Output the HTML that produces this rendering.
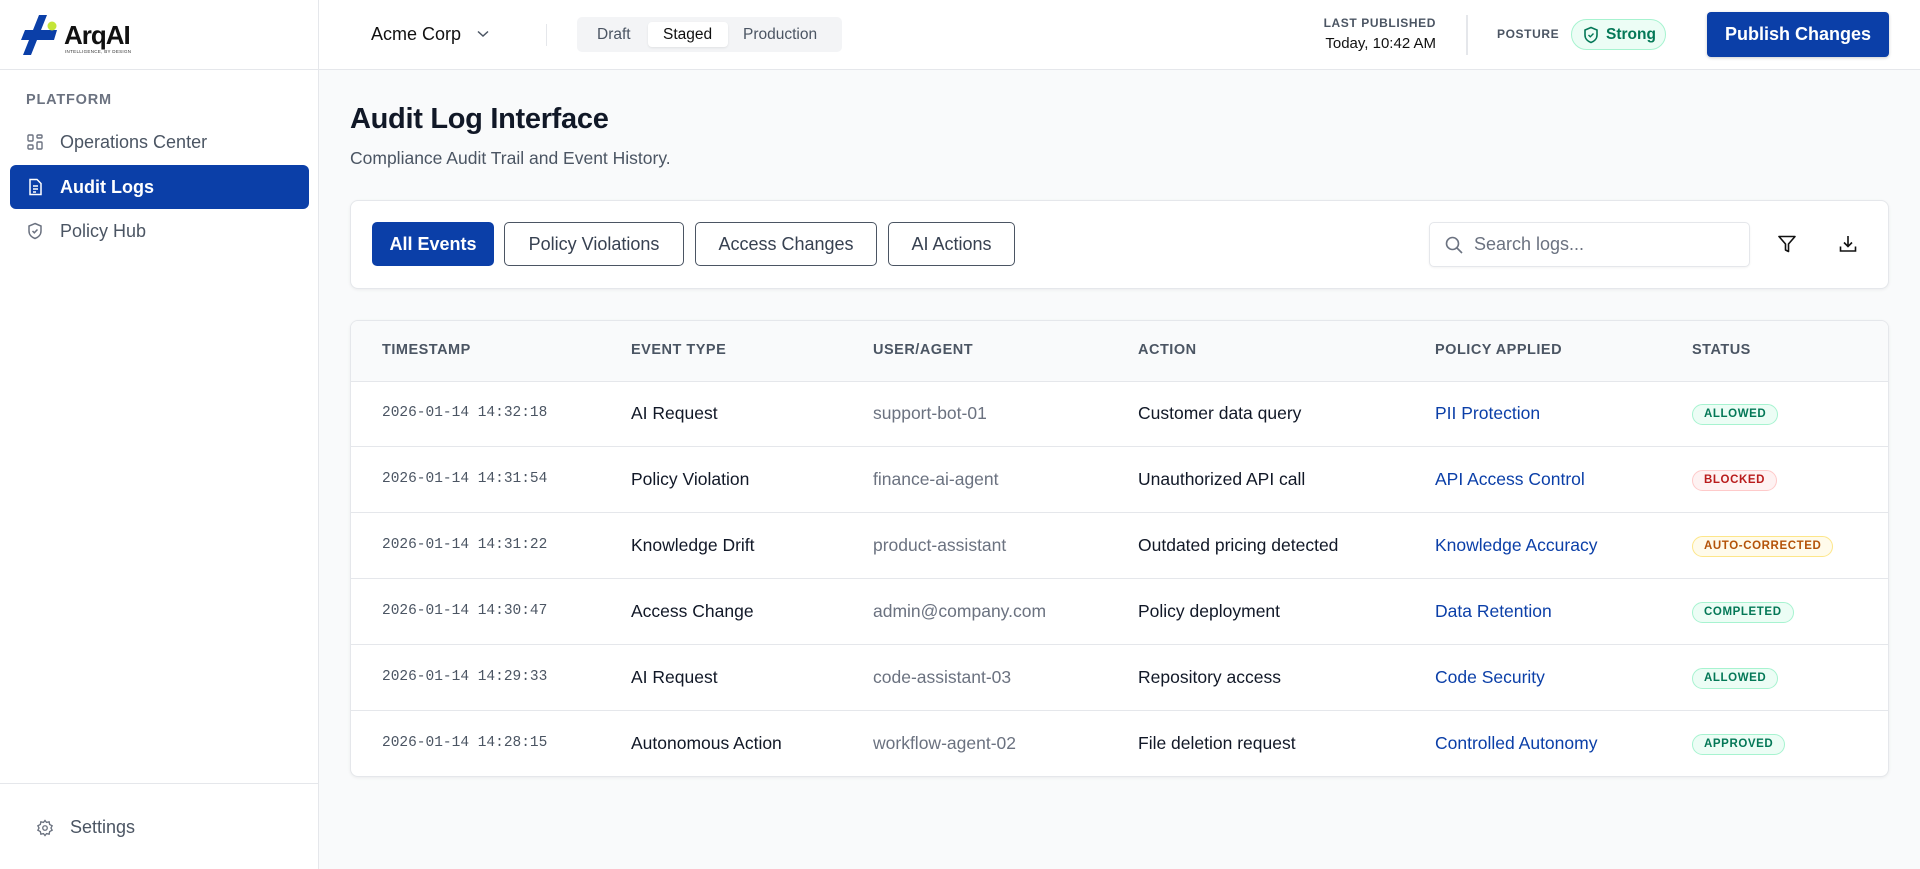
<!DOCTYPE html>
<html><head><meta charset="utf-8"><style>
*{box-sizing:border-box;margin:0;padding:0}
body{width:1920px;height:869px;overflow:hidden;font-family:"Liberation Sans",sans-serif;background:#f9fafb;color:#111827;position:relative}
.abs{position:absolute}
.side{left:0;top:0;width:319px;height:869px;background:#fff;border-right:1px solid #e5e7eb}
.head{left:319px;top:0;width:1601px;height:70px;background:#fff;border-bottom:1px solid #e5e7eb}
.logoline{left:0;top:69px;width:319px;height:1px;background:#e5e7eb}
.nav{left:10px;width:299px;height:44px;border-radius:6px;display:flex;align-items:center;padding-left:16px;font-size:18px;color:#4b5563}
.nav svg{margin-right:16px}
.btn{top:222px;height:44px;border:1px solid #4b5563;border-radius:5px;display:flex;align-items:center;justify-content:center;font-size:18px;color:#374151;background:#fff}
.th{top:320px;height:61px;line-height:61px;font-size:14.5px;font-weight:bold;color:#4b5563;letter-spacing:.5px}
.cell{font-size:17.5px}
.ts{font-family:"Liberation Mono",monospace;font-size:14.5px;color:#4b5563}
.badge{height:21px;line-height:19px;border-radius:11px;font-size:11.5px;font-weight:bold;letter-spacing:.6px;padding:0 11px;border:1px solid}
.g{background:#ecfdf5;border-color:#a7f3d0;color:#047857}
.r{background:#fef2f2;border-color:#fecaca;color:#b91c1c}
.y{background:#fffbeb;border-color:#fde68a;color:#b45309}
.rowline{left:351px;width:1537px;height:1px;background:#e5e7eb}
</style></head><body>
<div class="abs side"></div>
<div class="abs head"></div>
<div class="abs logoline"></div>
<!-- logo -->
<svg class="abs" style="left:18px;top:14px" width="42" height="42" viewBox="0 0 40 42">
<path d="M20 1 L28 1 L22 16 L38 16 L35 26 L18 26 L12 41 L4 41 L10 26 L2 26 L6 16 L14 16 Z" fill="#0b3fa8"/>
<circle cx="33" cy="12" r="4.5" fill="#c4e538"/>
</svg>
<div class="abs" style="left:64px;top:20px;font-size:26px;font-weight:bold;letter-spacing:-1px;color:#111">ArqAI</div>
<div class="abs" style="left:65px;top:49px;font-size:4.5px;letter-spacing:.3px;color:#333">INTELLIGENCE, BY DESIGN</div>
<!-- header -->
<div class="abs" style="left:371px;top:24px;font-size:18px;color:#111">Acme Corp</div>
<svg class="abs" style="left:477px;top:30px" width="12" height="8" viewBox="0 0 12 8"><path d="M1 1.5 L6 6 L11 1.5" fill="none" stroke="#4b5563" stroke-width="1.5"/></svg>
<div class="abs" style="left:546px;top:24px;width:1px;height:22px;background:#e5e7eb"></div>
<div class="abs" style="left:577px;top:17px;width:265px;height:35px;background:#f3f4f6;border-radius:5px"></div>
<div class="abs" style="left:597px;top:26px;font-size:15.5px;color:#4b5563">Draft</div>
<div class="abs" style="left:648px;top:22px;width:80px;height:25px;background:#fff;border-radius:4px;box-shadow:0 1px 2px rgba(0,0,0,.08)"></div>
<div class="abs" style="left:663px;top:26px;font-size:15.5px;color:#111">Staged</div>
<div class="abs" style="left:743px;top:26px;font-size:15.5px;color:#4b5563">Production</div>
<div class="abs" style="left:1280px;top:16px;width:156px;text-align:right;font-size:12px;font-weight:bold;letter-spacing:.6px;color:#4b5563">LAST PUBLISHED</div>
<div class="abs" style="left:1280px;top:35px;width:156px;text-align:right;font-size:15px;color:#111">Today, 10:42 AM</div>
<div class="abs" style="left:1466px;top:15px;width:2px;height:40px;background:#e5e7eb"></div>
<div class="abs" style="left:1497px;top:27px;font-size:12px;font-weight:bold;letter-spacing:.6px;color:#4b5563">POSTURE</div>
<div class="abs" style="left:1571px;top:19px;width:95px;height:31px;border-radius:16px;background:#ecfdf5;border:1px solid #a7f3d0"></div>
<svg class="abs" style="left:1583px;top:26px" width="16" height="18" viewBox="0 0 16 18"><path d="M8 1.5 L14 4 V9 C14 13 11 15.5 8 16.5 C5 15.5 2 13 2 9 V4 Z" fill="none" stroke="#047857" stroke-width="1.6"/><path d="M5.5 9 L7.3 10.8 L10.5 7.5" fill="none" stroke="#047857" stroke-width="1.4"/></svg>
<div class="abs" style="left:1606px;top:26px;font-size:15.5px;font-weight:bold;color:#047857">Strong</div>
<div class="abs" style="left:1707px;top:12px;width:182px;height:45px;background:#0b3fa8;border-radius:4px;color:#fff;font-size:18px;font-weight:bold;display:flex;align-items:center;justify-content:center;box-shadow:0 1px 3px rgba(0,0,0,.2)">Publish Changes</div>
<!-- sidebar -->
<div class="abs" style="left:26px;top:92px;font-size:14.5px;color:#6b7280;letter-spacing:.8px;font-weight:bold">PLATFORM</div>
<div class="abs nav" style="top:120px"><svg width="18" height="18" viewBox="0 0 18 18" fill="none" stroke="#6b7280" stroke-width="1.4"><rect x="2" y="2" width="5" height="6" rx="1"/><rect x="11" y="2" width="5" height="3" rx="1"/><rect x="11" y="9" width="5" height="7" rx="1"/><rect x="2" y="12" width="5" height="4" rx="1"/></svg>Operations Center</div>
<div class="abs nav" style="top:165px;background:#0b3fa8;color:#fff;font-weight:bold"><svg width="18" height="18" viewBox="0 0 18 18" fill="none" stroke="#fff" stroke-width="1.5"><path d="M4 1.5 H11 L15 5.5 V16.5 H4 Z"/><path d="M7 8 H12 M7 11 H12 M7 14 H10"/></svg>Audit Logs</div>
<div class="abs nav" style="top:209px"><svg width="18" height="18" viewBox="0 0 18 18" fill="none" stroke="#6b7280" stroke-width="1.5"><path d="M9 1.5 L15 4 V9 C15 13 12 15.5 9 16.5 C6 15.5 3 13 3 9 V4 Z"/><path d="M6.5 9 L8.3 10.8 L11.5 7.5"/></svg>Policy Hub</div>
<div class="abs" style="left:0;top:783px;width:319px;height:1px;background:#e5e7eb"></div>
<svg class="abs" style="left:36px;top:819px" width="18" height="18" viewBox="0 0 24 24" fill="none" stroke="#6b7280" stroke-width="1.8"><circle cx="12" cy="12" r="3"/><path d="M12 2 L14 4.5 L17.5 3.8 L18.2 7.3 L21.5 9 L20 12 L21.5 15 L18.2 16.7 L17.5 20.2 L14 19.5 L12 22 L10 19.5 L6.5 20.2 L5.8 16.7 L2.5 15 L4 12 L2.5 9 L5.8 7.3 L6.5 3.8 L10 4.5 Z"/></svg>
<div class="abs" style="left:70px;top:817px;font-size:18px;color:#4b5563">Settings</div>
<!-- title -->
<div class="abs" style="left:350px;top:103px;font-size:29px;font-weight:bold;letter-spacing:-.3px;color:#111827">Audit Log Interface</div>
<div class="abs" style="left:350px;top:148px;font-size:17.5px;color:#4b5563">Compliance Audit Trail and Event History.</div>
<!-- filter card -->
<div class="abs" style="left:350px;top:200px;width:1539px;height:89px;background:#fff;border:1px solid #e5e7eb;border-radius:8px;box-shadow:0 1px 3px rgba(0,0,0,.06)"></div>
<div class="abs btn" style="left:372px;width:122px;background:#0b3fa8;border-color:#0b3fa8;color:#fff;font-weight:bold">All Events</div>
<div class="abs btn" style="left:504px;width:180px">Policy Violations</div>
<div class="abs btn" style="left:695px;width:182px">Access Changes</div>
<div class="abs btn" style="left:888px;width:127px">AI Actions</div>
<div class="abs" style="left:1429px;top:222px;width:321px;height:45px;border:1px solid #e5e7eb;border-radius:5px;background:#fff;box-shadow:0 1px 2px rgba(0,0,0,.05)"></div>
<svg class="abs" style="left:1444px;top:235px" width="20" height="20" viewBox="0 0 20 20" fill="none" stroke="#6b7280" stroke-width="1.6"><circle cx="8.5" cy="8.5" r="6"/><path d="M13 13 L18 18"/></svg>
<div class="abs" style="left:1474px;top:234px;font-size:18px;color:#6b7280">Search logs...</div>
<svg class="abs" style="left:1777px;top:234px" width="20" height="20" viewBox="0 0 20 20" fill="none" stroke="#111" stroke-width="1.6"><path d="M2 2.5 H18 L11.5 10 V17.5 L8.5 16 V10 Z" stroke-linejoin="round"/></svg>
<svg class="abs" style="left:1838px;top:234px" width="20" height="20" viewBox="0 0 20 20" fill="none" stroke="#111" stroke-width="1.6"><path d="M10 2 V12 M6 8.5 L10 12.5 L14 8.5 M2.5 12.5 V17 H17.5 V12.5"/></svg>
<!-- table -->
<div class="abs" style="left:350px;top:320px;width:1539px;height:457px;background:#fff;border:1px solid #e5e7eb;border-radius:8px;box-shadow:0 1px 3px rgba(0,0,0,.06);overflow:hidden"><div style="height:61px;background:#f9fafb;border-bottom:1px solid #e5e7eb"></div></div>
<div class="abs th" style="left:382px">TIMESTAMP</div>
<div class="abs th" style="left:631px">EVENT TYPE</div>
<div class="abs th" style="left:873px">USER/AGENT</div>
<div class="abs th" style="left:1138px">ACTION</div>
<div class="abs th" style="left:1435px">POLICY APPLIED</div>
<div class="abs th" style="left:1692px">STATUS</div>

<div class="abs rowline" style="top:446px"></div>
<div class="abs rowline" style="top:512px"></div>
<div class="abs rowline" style="top:578px"></div>
<div class="abs rowline" style="top:644px"></div>
<div class="abs rowline" style="top:710px"></div>

<div class="abs ts" style="left:382px;top:405px">2026-01-14 14:32:18</div>
<div class="abs cell" style="left:631px;top:403px">AI Request</div>
<div class="abs cell" style="left:873px;top:403px;color:#6b7280">support-bot-01</div>
<div class="abs cell" style="left:1138px;top:403px">Customer data query</div>
<div class="abs cell" style="left:1435px;top:403px;color:#0b3fa8">PII Protection</div>
<div class="abs badge g" style="left:1692px;top:404px">ALLOWED</div>

<div class="abs ts" style="left:382px;top:471px">2026-01-14 14:31:54</div>
<div class="abs cell" style="left:631px;top:469px">Policy Violation</div>
<div class="abs cell" style="left:873px;top:469px;color:#6b7280">finance-ai-agent</div>
<div class="abs cell" style="left:1138px;top:469px">Unauthorized API call</div>
<div class="abs cell" style="left:1435px;top:469px;color:#0b3fa8">API Access Control</div>
<div class="abs badge r" style="left:1692px;top:470px">BLOCKED</div>

<div class="abs ts" style="left:382px;top:537px">2026-01-14 14:31:22</div>
<div class="abs cell" style="left:631px;top:535px">Knowledge Drift</div>
<div class="abs cell" style="left:873px;top:535px;color:#6b7280">product-assistant</div>
<div class="abs cell" style="left:1138px;top:535px">Outdated pricing detected</div>
<div class="abs cell" style="left:1435px;top:535px;color:#0b3fa8">Knowledge Accuracy</div>
<div class="abs badge y" style="left:1692px;top:536px">AUTO-CORRECTED</div>

<div class="abs ts" style="left:382px;top:603px">2026-01-14 14:30:47</div>
<div class="abs cell" style="left:631px;top:601px">Access Change</div>
<div class="abs cell" style="left:873px;top:601px;color:#6b7280">admin@company.com</div>
<div class="abs cell" style="left:1138px;top:601px">Policy deployment</div>
<div class="abs cell" style="left:1435px;top:601px;color:#0b3fa8">Data Retention</div>
<div class="abs badge g" style="left:1692px;top:602px">COMPLETED</div>

<div class="abs ts" style="left:382px;top:669px">2026-01-14 14:29:33</div>
<div class="abs cell" style="left:631px;top:667px">AI Request</div>
<div class="abs cell" style="left:873px;top:667px;color:#6b7280">code-assistant-03</div>
<div class="abs cell" style="left:1138px;top:667px">Repository access</div>
<div class="abs cell" style="left:1435px;top:667px;color:#0b3fa8">Code Security</div>
<div class="abs badge g" style="left:1692px;top:668px">ALLOWED</div>

<div class="abs ts" style="left:382px;top:735px">2026-01-14 14:28:15</div>
<div class="abs cell" style="left:631px;top:733px">Autonomous Action</div>
<div class="abs cell" style="left:873px;top:733px;color:#6b7280">workflow-agent-02</div>
<div class="abs cell" style="left:1138px;top:733px">File deletion request</div>
<div class="abs cell" style="left:1435px;top:733px;color:#0b3fa8">Controlled Autonomy</div>
<div class="abs badge g" style="left:1692px;top:734px">APPROVED</div>
</body></html>
